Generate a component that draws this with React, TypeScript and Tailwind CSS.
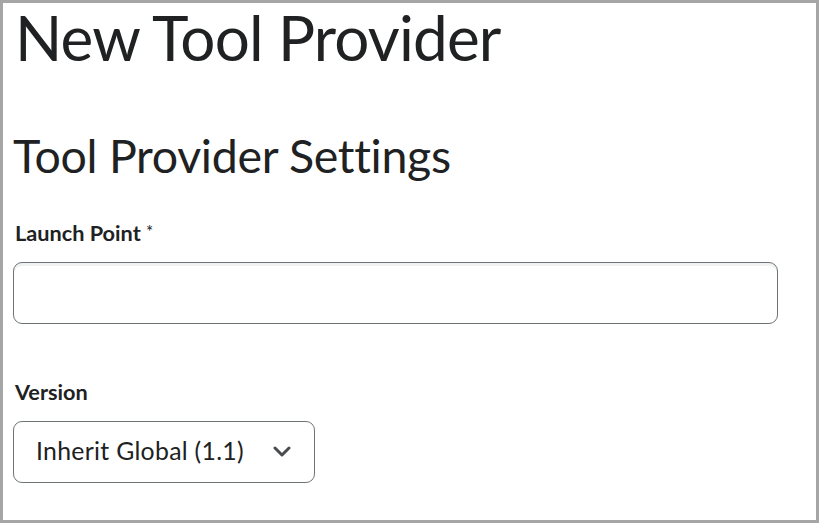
import React from 'react';

function Chevron() {
  return (
    <svg width="18" height="11" viewBox="0 0 18 11" fill="none" className="shrink-0">
      <path d="M2 2l7 7 7-7" stroke="#494c4e" strokeWidth="3" strokeLinecap="round" strokeLinejoin="round" />
    </svg>
  );
}

export default function App() {
  return (
    <div
      className="w-[819px] h-[523px] box-border border-[3px] border-[#a6a6a6] bg-white text-[#202122] pl-[10px] overflow-hidden"
      style={{ fontFamily: 'Lato, "Open Sans", sans-serif' }}
    >
      {/* Page title */}
      <h1 className="text-[62px] leading-none font-normal tracking-[-0.8px] mt-[3px] ml-[2px]">New Tool Provider</h1>

      {/* Section */}
      <h2 className="text-[46.5px] leading-none font-normal tracking-[-0.3px] mt-[64px]">Tool Provider Settings</h2>

      <label className="block text-[21.7px] leading-none font-bold mt-[44px] ml-[2px]">
        Launch Point <span className="font-normal text-[17px] align-top">*</span>
      </label>
      <input
        type="text"
        className="block mt-[18px] w-[765px] h-[62px] box-border border-[1.5px] border-[#6e7376] rounded-[9px] shadow-[inset_0_3px_0_0_rgba(177,185,190,0.2)] outline-none px-[23px] text-[24.8px]"
      />

      <label className="block text-[21.7px] leading-none font-bold mt-[58px] ml-[2px]">Version</label>
      <div className="mt-[17px] w-[302px] h-[62px] box-border border-[1.5px] border-[#6e7376] rounded-[9px] flex items-center justify-between pl-[22px] pr-[23px]">
        <span className="text-[24.8px] leading-none tracking-[0.3px] -mt-[1px]">Inherit Global (1.1)</span>
        <Chevron />
      </div>
    </div>
  );
}
